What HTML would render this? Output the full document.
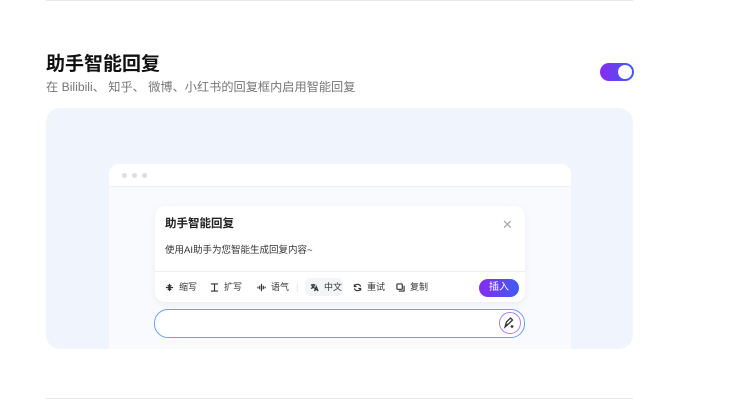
<!DOCTYPE html><html><head><meta charset="utf-8"><style>
body{margin:0;width:750px;height:416px;background:#fff;font-family:"Liberation Sans","Noto Sans CJK SC",sans-serif;position:relative;overflow:hidden}
.a{position:absolute}
.tb span{position:absolute;top:281px;font-size:9px;color:#333;display:flex;align-items:center;gap:5px;line-height:12px}
.tb svg{width:9px;height:9px;fill:none;stroke:#333;stroke-width:1.3}
</style></head><body>
<div class="a" style="left:46px;top:0;width:587px;height:1px;background:#e8e8e8"></div>
<div class="a" style="left:46px;top:49px;font-size:19px;font-weight:bold;color:#111">助手智能回复</div>
<div class="a" style="left:46px;top:77px;font-size:12.2px;color:#777">在 Bilibili、 知乎、 微博、小红书的回复框内启用智能回复</div>
<div class="a" style="left:600px;top:63px;width:34px;height:18px;border-radius:9px;background:linear-gradient(90deg,#8a2bf0,#3b5cf5)"><div class="a" style="right:2px;top:2px;width:14px;height:14px;border-radius:50%;background:#fff"></div></div>
<div class="a" style="left:46px;top:108px;width:587px;height:241px;border-radius:14px;background:#f0f5fd;overflow:hidden">
 <div class="a" style="left:63px;top:56px;width:462px;height:200px;border-radius:10px 10px 0 0;background:#f8fafd">
  <div style="height:22px;background:#fff;border-bottom:1px solid #eef0f4;border-radius:10px 10px 0 0;position:relative">
   <i class="a" style="left:13px;top:9px;width:5px;height:5px;border-radius:50%;background:#ddd"></i>
   <i class="a" style="left:23px;top:9px;width:5px;height:5px;border-radius:50%;background:#ddd"></i>
   <i class="a" style="left:33px;top:9px;width:5px;height:5px;border-radius:50%;background:#ddd"></i>
  </div>
 </div>
</div>
<div class="a" style="left:155px;top:206px;width:370px;height:96px;border-radius:10px;background:#fff;box-shadow:0 2px 8px rgba(0,0,0,.06)"></div>
<div class="a" style="left:165px;top:215px;font-size:11.5px;font-weight:bold;color:#222">助手智能回复</div>
<div class="a" style="left:502px;top:217px;font-size:13px;color:#aaa">✕</div>
<div class="a" style="left:165px;top:242px;font-size:9.5px;color:#333">使用AI助手为您智能生成回复内容~</div>
<div class="a" style="left:155px;top:271px;width:370px;height:1px;background:#eee"></div>
<div class="a" style="left:305px;top:278px;width:38px;height:18px;border-radius:5px;background:#f3f4f6"></div>
<div class="tb">
<span style="left:165px"><svg viewBox="0 0 10 10"><path d="M1 5h8M5 1v3M3 2.5l2 1.5 2-1.5M5 9V6M3 7.5l2-1.5 2 1.5"/></svg>缩写</span>
<span style="left:210px"><svg viewBox="0 0 10 10"><path d="M1 1h8M1 9h8M5 1v8"/></svg>扩写</span>
<span style="left:257px"><svg viewBox="0 0 10 10"><path d="M1 4v2M3 3v4M5 1v8M7 3v4M9 4v2"/></svg>语气</span>
<span style="left:296px;color:#ddd">|</span>
<span style="left:310px"><svg viewBox="0 0 10 10"><path d="M1 2h5M3.5 1v1M2 2c.5 2 2 3.5 4 4M5 2c-.5 2-2 3.5-4 4M5 9l2-5 2 5M5.8 7.5h2.4"/></svg>中文</span>
<span style="left:353px"><svg viewBox="0 0 10 10"><path d="M8.5 4A3.7 3.7 0 0 0 1.5 4M1.5 6a3.7 3.7 0 0 0 7 0M1.5 1.5V4H4M8.5 8.5V6H6"/></svg>重试</span>
<span style="left:396px"><svg viewBox="0 0 10 10"><rect x="1" y="1" width="6" height="6" rx="1"/><path d="M3 9h6V3"/></svg>复制</span>
</div>
<div class="a" style="left:479px;top:279px;width:40px;height:18px;border-radius:9px;background:linear-gradient(90deg,#8a2bf0,#3b5cf5);color:#fff;font-size:10px;text-align:center;line-height:18px">插入</div>
<div class="a" style="left:154px;top:309px;width:369px;height:27px;border:1.5px solid #6aa1f5;border-radius:14px;background:#fff"></div>
<div class="a" style="left:499px;top:312px;width:22px;height:22px;border-radius:50%;border:1.5px solid #b27cf2;box-sizing:border-box"><svg width="19" height="19" viewBox="0 0 19 19" style="position:absolute;left:0;top:0" fill="none" stroke="#333" stroke-width="1.3"><path d="M5 14l1.5-5 4-4 2 2-4 4z M5 14l3-3"/><path d="M12 12v3M10.5 13.5h3"/></svg></div>
<div class="a" style="left:46px;top:398px;width:587px;height:1px;background:#e8e8e8"></div>
</body></html>
